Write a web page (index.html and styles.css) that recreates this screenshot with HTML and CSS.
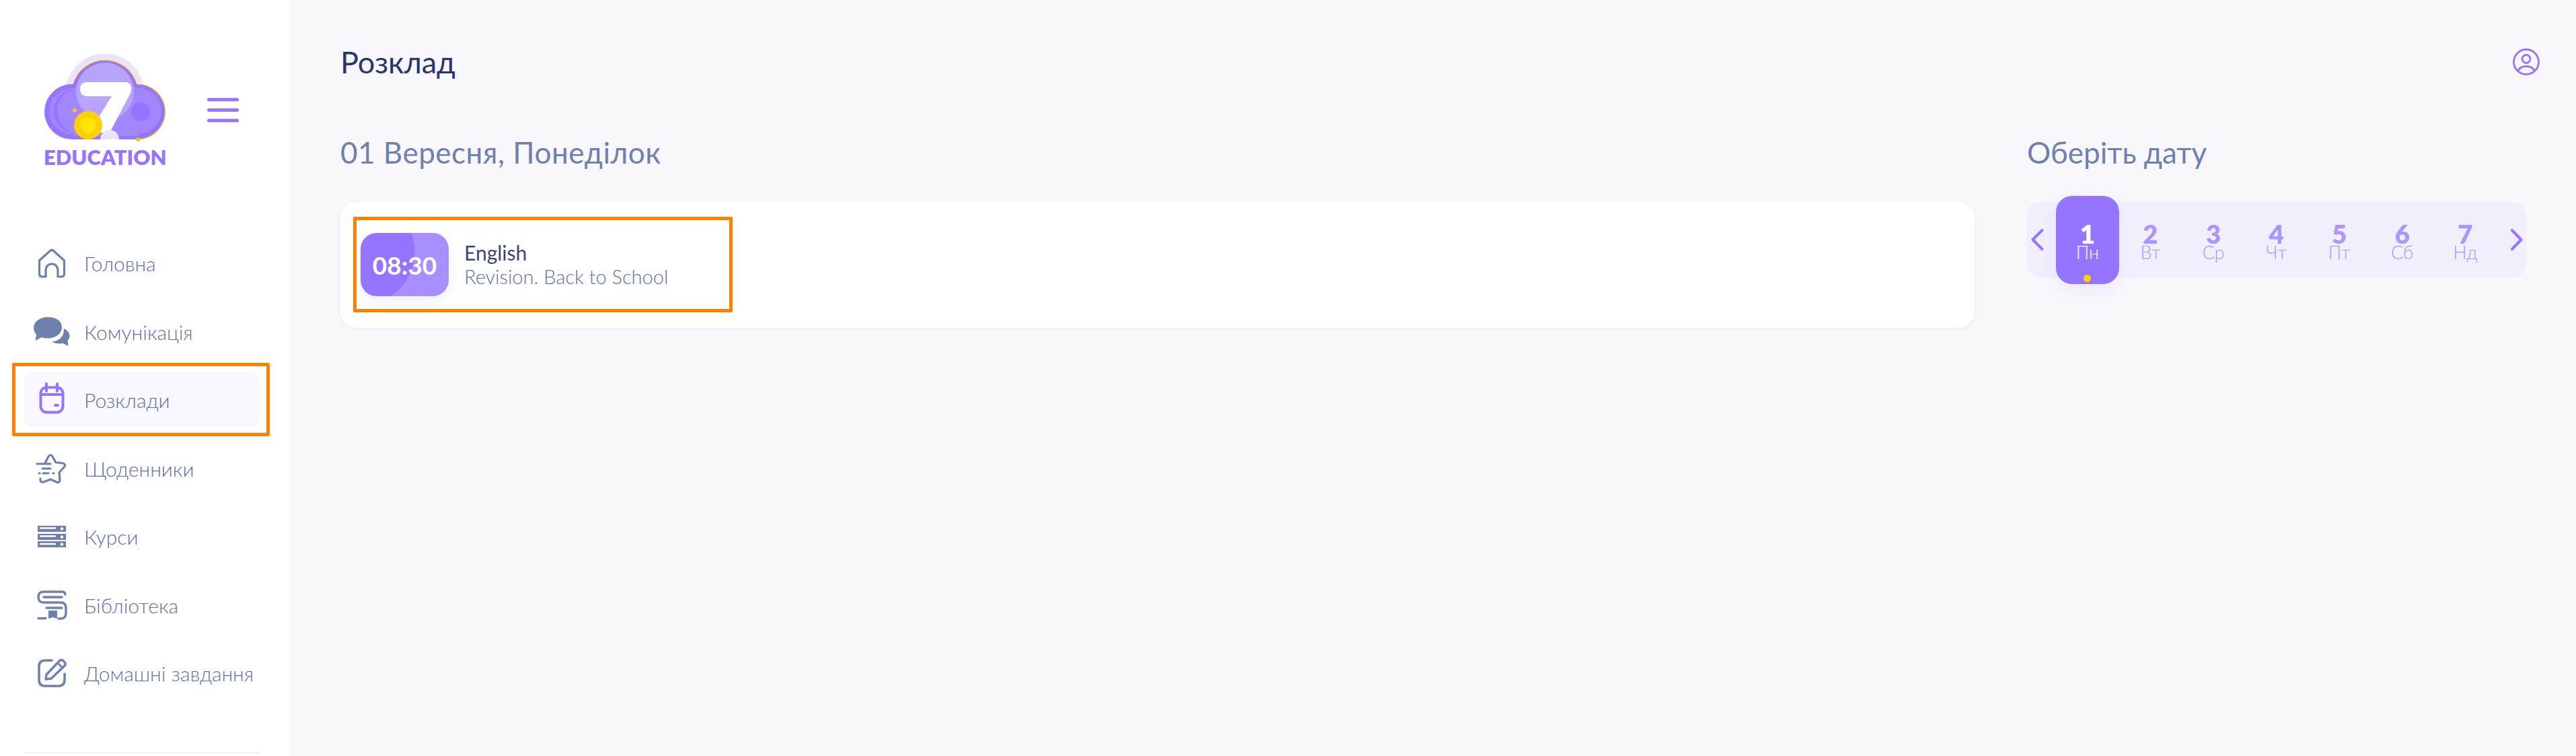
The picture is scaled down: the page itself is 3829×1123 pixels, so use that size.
FILE: index.html
```html
<!DOCTYPE html>
<html lang="uk">
<head>
    <meta charset="UTF-8">
    <title>Розклад</title>
    <link rel="stylesheet" href="styles.css">
</head>
<body>
<div class="page">
    <aside class="sidebar">
        <div class="brand">
            <div class="logo">
                <svg class="logo-mark" viewBox="65 76 184 134" width="184" height="134">
                    <circle cx="156" cy="138" r="58.5" fill="#e9e4ff"/>
                    <path d="M107 207a41 41 0 0 1 0-82h1.500a49.500 49.500 0 0 1 95 0a41 41 0 0 1 2 82z" fill="#9575ff"/>
                    <path d="M108.500 125a49.500 49.500 0 0 1 95 0a41 41 0 0 1 2 82" fill="none" stroke="#ffd000" stroke-width="1.200"/>
                    <circle cx="206" cy="165" r="34" fill="#a086ff"/>
                    <rect x="110" y="130" width="96" height="72" fill="#a086ff"/>
                    <circle cx="107" cy="165" r="34" fill="#a086ff"/>
                    <circle cx="113" cy="165" r="33" fill="#9575ff"/>
                    <circle cx="119" cy="165" r="34" fill="#a086ff"/>
                    <circle cx="209" cy="166" r="14" fill="#9575ff"/>
                    <circle cx="156" cy="136" r="43" fill="#b8a3ff"/>
                    <path d="M129 122h56q10 0 10 9q0 7-3 11l-29 55h-15l-8-12l26-42h-37q-10 0-10-10.500q0-10.500 10-10.500z" fill="#fff"/>
                    <path d="M149 207a14 14 0 0 1 28 0z" fill="#e9e4ff"/>
                    <circle cx="131" cy="186" r="21" fill="#ffd000"/>
                    <circle cx="131" cy="186" r="11.500" fill="#ffe600"/>
                    <circle cx="111" cy="164" r="3" fill="#ffc800"/>
                    <circle cx="205" cy="207" r="3" fill="#f5c000"/>
                </svg>
                <div class="logo-text">EDUCATION</div>
            </div>
            <svg class="burger" viewBox="0 0 47 37" width="47" height="37">
                <path d="M2.500 3h42M2.500 18.500h42M2.500 34h42" stroke="#9575ff" stroke-width="5" stroke-linecap="round"/>
            </svg>
        </div>
        <nav class="nav">
            <a class="nav-item">
                <svg class="nav-icon" viewBox="0 0 54 54">
                    <path d="M8.500 23L24.500 8.500q2.500-2 5 0L45.500 23v20q0 4-4 4H36V37a9 9 0 0 0-18 0V47h-5.500q-4 0-4-4z" fill="none" stroke="#7080ad" stroke-width="3.200" stroke-linejoin="round"/>
                </svg>
                <span>Головна</span>
            </a>
            <a class="nav-item">
                <svg class="nav-icon" viewBox="0 0 54 54">
                    <path d="M21 5C9 5 0 12 0 21c0 4 2 8 4 10l-1.500 9 9.500-5c3 1 6 1.500 9 1.500 12 0 21-7 21-16.500S33 5 21 5z" fill="#7080ad"/>
                    <path d="M44.500 22c5 2 9 6 9 10.500 0 3-1 5-3 7.500l1 8-8-4c-5 1-12 .5-16-2.500 11-1 19-9 17-19.500z" fill="#7080ad"/>
                </svg>
                <span>Комунікація</span>
            </a>
            <a class="nav-item nav-item-active">
                <svg class="nav-icon" viewBox="0 0 54 54">
                    <rect x="10.500" y="8.500" width="33" height="37" rx="9" fill="none" stroke="#9575ff" stroke-width="4"/>
                    <path d="M19 3v11M35 3v11M10.500 19h33" fill="none" stroke="#9575ff" stroke-width="4" stroke-linecap="round"/>
                    <rect x="30" y="33" width="8" height="4" rx="2" fill="#9575ff"/>
                </svg>
                <span>Розклади</span>
            </a>
            <a class="nav-item">
                <svg class="nav-icon" viewBox="0 0 54 54">
                    <path d="M10 42q-1 6 5 5l10-4 9 4q5 2 5-4l-1-10 8-9q2-4-3-5l-10-1-5-9q-3-4-6 0l-5 10" fill="none" stroke="#7080ad" stroke-width="3.200" stroke-linecap="round" stroke-linejoin="round"/>
                    <path d="M5 20h20M13 27h12M9 34h-1M14 34h8M29 34h1" fill="none" stroke="#7080ad" stroke-width="3.200" stroke-linecap="round"/>
                </svg>
                <span>Щоденники</span>
            </a>
            <a class="nav-item">
                <svg class="nav-icon" viewBox="0 0 54 54">
                    <path d="M6 11h42v9H6zM6 23h42v9H6zM6 34h42v9H6z" fill="#7080ad"/>
                    <path d="M9 14.500h24M9 26.500h24M9 38h24" stroke="#fff" stroke-width="2.500"/>
                    <circle cx="42" cy="15.500" r="2.200" fill="#fff"/>
                    <circle cx="42" cy="27.500" r="2.200" fill="#fff"/>
                    <circle cx="42" cy="38.500" r="2.200" fill="#fff"/>
                </svg>
                <span>Курси</span>
            </a>
            <a class="nav-item">
                <svg class="nav-icon" viewBox="0 0 54 54">
                    <path d="M47 11q0-4-5-4H15Q7 7 7 15t8 8h25q8 0 8 8v8q0 8-8 8h-3" fill="none" stroke="#7080ad" stroke-width="3.400" stroke-linecap="round"/>
                    <path d="M15 15h27M19 31h23M7 46.500h11" fill="none" stroke="#7080ad" stroke-width="3.400" stroke-linecap="round"/>
                    <path d="M22 35h13v12l-6.500-2-6.500 2z" fill="#7080ad"/>
                </svg>
                <span>Бібліотека</span>
            </a>
            <a class="nav-item">
                <svg class="nav-icon" viewBox="0 0 54 54">
                    <path d="M27 8H17q-9 0-9 9v20q0 9 9 9h20q9 0 9-9V28" fill="none" stroke="#7080ad" stroke-width="3.600" stroke-linecap="round"/>
                    <path d="M18 36l1-7L38 9q3-3 6-.5l2 2q2.500 3-.5 6L26 35z" fill="none" stroke="#7080ad" stroke-width="3.400" stroke-linejoin="round"/>
                    <path d="M36 12l7 7" fill="none" stroke="#7080ad" stroke-width="3"/>
                </svg>
                <span>Домашні завдання</span>
            </a>
        </nav>
        <div class="sidebar-line"></div>
    </aside>
    <main class="main">
        <div class="topbar">
            <h1 class="title">Розклад</h1>
            <svg class="user" viewBox="0 0 40 40" width="40" height="40">
                <circle cx="20" cy="20" r="18.500" fill="none" stroke="#9575ff" stroke-width="2.800"/>
                <circle cx="20" cy="15.500" r="6" fill="none" stroke="#9575ff" stroke-width="2.800"/>
                <path d="M8 33q3-6.500 12-6.500T32 33" fill="none" stroke="#9575ff" stroke-width="2.800"/>
            </svg>
        </div>
        <div class="columns">
            <section class="schedule">
                <h2 class="heading heading-date">01 Вересня, Понеділок</h2>
                <div class="card">
                    <div class="lesson">
                        <div class="time"><span>08:30</span></div>
                        <div class="lesson-info">
                            <div class="lesson-name">English</div>
                            <div class="lesson-topic">Revision. Back to School</div>
                        </div>
                    </div>
                </div>
            </section>
            <section class="picker">
                <h2 class="heading">Оберіть дату</h2>
                <div class="days">
                    <svg class="arrow" viewBox="0 0 43 34" width="43" height="34">
                        <path d="M22.500 3L8.500 17l14 14" fill="none" stroke="#9575ff" stroke-width="4" stroke-linecap="round" stroke-linejoin="round"/>
                    </svg>
                    <div class="day day-active"><b>1</b><span>Пн</span></div>
                    <div class="day"><b>2</b><span>Вт</span></div>
                    <div class="day"><b>3</b><span>Ср</span></div>
                    <div class="day"><b>4</b><span>Чт</span></div>
                    <div class="day"><b>5</b><span>Пт</span></div>
                    <div class="day"><b>6</b><span>Сб</span></div>
                    <div class="day"><b>7</b><span>Нд</span></div>
                    <svg class="arrow" viewBox="0 0 43 34" width="43" height="34">
                        <path d="M23 3l13.500 14-13.500 14" fill="none" stroke="#9575ff" stroke-width="4" stroke-linecap="round" stroke-linejoin="round"/>
                    </svg>
                </div>
            </section>
        </div>
    </main>
</div>
</body>
</html>
```

FILE: styles.css
```css
html, body{
    margin:0;
    height:100%;
    overflow:hidden;
}
body{
    font-family:"Lato","Noto Sans",sans-serif;
    background-color:#f7f7fc;
    color:#7080ad;
}
h1, h2{
    margin:0;
    font-weight:400;
}

.page{
    display:flex;
    height:100%;
}

/* sidebar */
.sidebar{
    width:431px;
    flex-shrink:0;
    box-sizing:border-box;
    padding:76px 45px 0 35px;
    background-color:#fff;
    display:flex;
    flex-direction:column;
}
.brand{
    display:flex;
    align-items:flex-start;
    padding-left:30px;
    height:274px;
}
.logo{
    width:184px;
}
.logo-mark{
    display:block;
}
.logo-text{
    margin-top:6px;
    font-size:31px;
    line-height:34px;
    font-weight:800;
    color:#9575ff;
    white-space:nowrap;
}
.burger{
    margin:69px 0 0 59px;
}
.nav{
    display:flex;
    flex-direction:column;
    gap:19.500px;
}
.nav-item{
    position:relative;
    display:flex;
    align-items:center;
    gap:21px;
    height:82px;
    padding-left:15px;
    border-radius:14px;
    font-size:30px;
    font-weight:300;
    color:#5f70a2;
}
.nav-icon{
    width:54px;
    height:54px;
    flex-shrink:0;
}
.nav-item-active{
    background-color:#f8f8fe;
}
.nav-item-active::after{
    content:"";
    position:absolute;
    top:-14px;
    right:-15px;
    bottom:-13px;
    left:-17px;
    border:5px solid #ff8000;
    border-radius:2px;
}
.sidebar-line{
    height:2px;
    margin-top:auto;
    margin-bottom:4px;
    background-color:#f3f3f9;
}

/* main */
.main{
    flex:1;
    box-sizing:border-box;
    padding:0 74px 0 75px;
}
.topbar{
    display:flex;
    align-items:center;
    justify-content:space-between;
    height:183px;
    margin-right:-20px;
}
.title{
    font-size:45px;
    color:#2a3570;
}
.user{
    flex-shrink:0;
}
.columns{
    display:flex;
    gap:78px;
    margin-top:13px;
}
.schedule{
    flex:1;
}
.picker{
    width:742px;
}
.heading{
    font-size:44px;
    line-height:60px;
    color:#7080ad;
}
.heading-date{
    letter-spacing:.5px;
}

.card{
    margin-top:44px;
    box-sizing:border-box;
    height:187px;
    padding:22px 19px;
    background-color:#fff;
    border-radius:24px;
    box-shadow:0 2px 6px rgba(112,128,173,.08);
}
.lesson{
    width:564px;
    height:142px;
    box-sizing:border-box;
    border:5px solid #ff8000;
    border-radius:2px;
    padding-left:6px;
    display:flex;
    align-items:center;
    gap:23px;
}
.time{
    width:131px;
    height:94px;
    flex-shrink:0;
    border-radius:24px;
    background-color:#a78fff;
    background-image:radial-gradient(circle at 0 27px, #9575ff 80px, transparent 81px);
    box-shadow:0 8px 20px rgba(149,117,255,.12);
    display:flex;
    align-items:center;
    justify-content:center;
    font-size:37px;
    font-weight:700;
    color:#fff;
}
.lesson-name{
    font-size:30px;
    line-height:36px;
    color:#3a4580;
}
.lesson-topic{
    font-size:29px;
    line-height:36px;
    font-weight:300;
    color:#5f70a2;
}

.days{
    margin-top:44px;
    height:112px;
    display:flex;
    align-items:center;
    background-color:#f1effc;
    border-radius:20px;
}
.arrow{
    width:43px;
    flex-shrink:0;
}
.day{
    width:93.600px;
    height:131px;
    flex-shrink:0;
    box-sizing:border-box;
    padding-top:38px;
    display:flex;
    flex-direction:column;
    align-items:center;
    color:#ab96ff;
}
.day b{
    font-size:38px;
    line-height:36px;
    font-weight:800;
}
.day span{
    margin-top:-3px;
    font-size:27px;
    line-height:26px;
    font-weight:300;
}
.day-active{
    position:relative;
    border-radius:24px;
    background-color:#9575ff;
    color:#fff;
    box-shadow:0 8px 24px rgba(149,117,255,.1);
}
.day-active::after{
    content:"";
    position:absolute;
    left:41px;
    bottom:3px;
    width:11px;
    height:11px;
    border-radius:50%;
    background-color:#ffd000;
}
```
